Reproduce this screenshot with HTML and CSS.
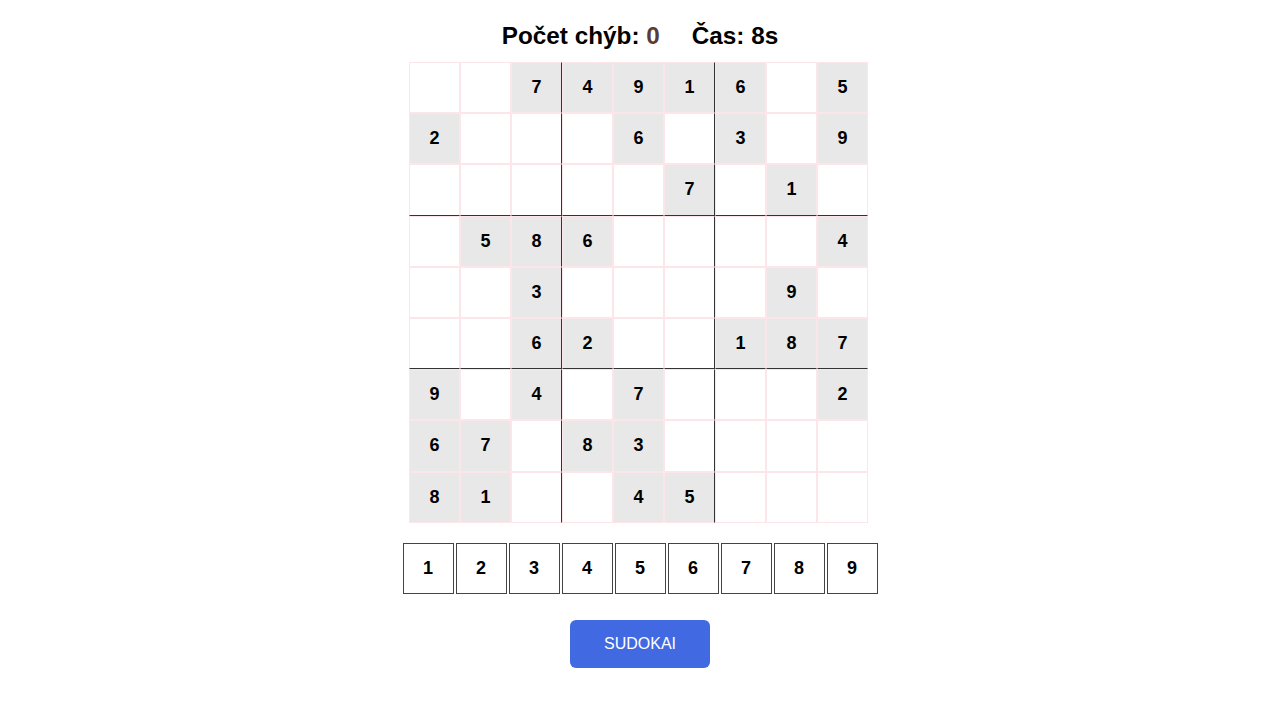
FILE: index.html
```html
<!DOCTYPE html>
<html lang="sk">
<head>
<meta charset="utf-8">
<title>Sudoku</title>
<link rel="stylesheet" href="styles.css">
</head>
<body>
<main class="app">
  <h1 class="status"><span>Počet chýb: <span class="errors">0</span></span><span>Čas: 8s</span></h1>
  <div class="board">
    <div class="cell"></div><div class="cell"></div><div class="cell given br">7</div><div class="cell given">4</div><div class="cell given">9</div><div class="cell given br">1</div><div class="cell given">6</div><div class="cell"></div><div class="cell given">5</div>
    <div class="cell given">2</div><div class="cell"></div><div class="cell br"></div><div class="cell"></div><div class="cell given">6</div><div class="cell br"></div><div class="cell given">3</div><div class="cell"></div><div class="cell given">9</div>
    <div class="cell bb"></div><div class="cell bb"></div><div class="cell bb br"></div><div class="cell bb"></div><div class="cell bb"></div><div class="cell given bb br">7</div><div class="cell bb"></div><div class="cell given bb">1</div><div class="cell bb"></div>
    <div class="cell"></div><div class="cell given">5</div><div class="cell given br">8</div><div class="cell given">6</div><div class="cell"></div><div class="cell br"></div><div class="cell"></div><div class="cell"></div><div class="cell given">4</div>
    <div class="cell"></div><div class="cell"></div><div class="cell given br">3</div><div class="cell"></div><div class="cell"></div><div class="cell br"></div><div class="cell"></div><div class="cell given">9</div><div class="cell"></div>
    <div class="cell bb"></div><div class="cell bb"></div><div class="cell given bb br">6</div><div class="cell given bb">2</div><div class="cell bb"></div><div class="cell bb br"></div><div class="cell given bb">1</div><div class="cell given bb">8</div><div class="cell given bb">7</div>
    <div class="cell given">9</div><div class="cell"></div><div class="cell given br">4</div><div class="cell"></div><div class="cell given">7</div><div class="cell br"></div><div class="cell"></div><div class="cell"></div><div class="cell given">2</div>
    <div class="cell given">6</div><div class="cell given">7</div><div class="cell br"></div><div class="cell given">8</div><div class="cell given">3</div><div class="cell br"></div><div class="cell"></div><div class="cell"></div><div class="cell"></div>
    <div class="cell given">8</div><div class="cell given">1</div><div class="cell br"></div><div class="cell"></div><div class="cell given">4</div><div class="cell given br">5</div><div class="cell"></div><div class="cell"></div><div class="cell"></div>
  </div>
  <div class="pad">
    <button class="key">1</button><button class="key">2</button><button class="key">3</button><button class="key">4</button><button class="key">5</button><button class="key">6</button><button class="key">7</button><button class="key">8</button><button class="key">9</button>
  </div>
  <button class="solve">SUDOKAI</button>
</main>
</body>
</html>
```

FILE: styles.css
```css
html, body {
  margin: 0;
  padding: 0;
  background: #ffffff;
}
body {
  font-family: "Liberation Sans", Arial, sans-serif;
  color: #000;
}
.app {
  display: flex;
  flex-direction: column;
  align-items: center;
  padding-top: 22px;
}
.status {
  margin: 0 0 12px 0;
  font-size: 24.3px;
  line-height: 28px;
  font-weight: bold;
  display: flex;
  gap: 32px;
  color: #000;
}
.errors {
  color: #5a3b35;
}
.board {
  display: grid;
  grid-template-columns: repeat(9, 51px);
  grid-template-rows: repeat(9, 51.2px);
  margin-left: -3px;
}
.cell {
  box-sizing: border-box;
  border: 1px solid #fde6ea;
  display: flex;
  align-items: center;
  justify-content: center;
  font-size: 18px;
  font-weight: bold;
  background: #fff;
}
.cell.given {
  background: #e8e8e8;
}
.cell.br {
  border-right: 1px solid #333;
}
.cell.bb {
  border-bottom: 1px solid #333;
}
.pad {
  display: flex;
  gap: 2px;
  margin-top: 20px;
}
.key {
  box-sizing: border-box;
  width: 51px;
  height: 51px;
  border: 1px solid #444;
  background: #fff;
  font-family: "Liberation Sans", Arial, sans-serif;
  font-size: 18px;
  font-weight: bold;
  color: #000;
  padding: 0;
}
.solve {
  margin-top: 26px;
  width: 140px;
  height: 48px;
  border: none;
  border-radius: 6px;
  background: #4169e1;
  color: #fff;
  font-family: "Liberation Sans", Arial, sans-serif;
  font-size: 16px;
  padding: 0;
}
```
